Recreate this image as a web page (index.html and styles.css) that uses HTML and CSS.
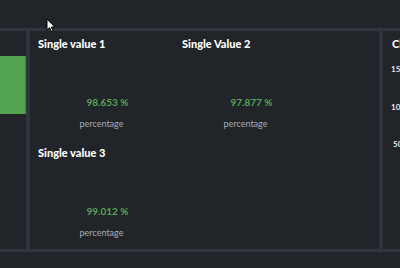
FILE: index.html
```html
<!DOCTYPE html>
<html lang="en">
<head>
    <meta charset="UTF-8" />
    <title>Dashboard</title>
    <link rel="stylesheet" href="styles.css">
</head>
<body>
<div class="topbar"></div>

<div class="panels">
  <div class="panel panel-left">
    <div class="bar"></div>
  </div>

  <div class="panel panel-main">
    <div class="single">
      <div class="title">Single value 1</div>
      <div class="value">98.653 %</div>
      <div class="caption">percentage</div>
    </div>
    <div class="single">
      <div class="title">Single Value 2</div>
      <div class="value">97.877 %</div>
      <div class="caption">percentage</div>
    </div>
    <div class="single">
      <div class="title">Single value 3</div>
      <div class="value">99.012 %</div>
      <div class="caption">percentage</div>
    </div>
  </div>

  <div class="panel panel-right">
    <div class="title">Chart</div>
    <div class="axis">
      <span>150</span>
      <span>100</span>
      <span class="short">50</span>
    </div>
  </div>
</div>

<!-- mouse pointer -->
<svg class="cursor" width="10" height="15" viewBox="0 0 10 15">
  <path d="M1 1 L1 12 L3.6 9.6 L5.4 13.6 L7 12.9 L5.3 9 L8.8 9 Z" fill="#fff" stroke="#000" stroke-width="1" stroke-linejoin="round"/>
</svg>
</body>
</html>
```

FILE: styles.css
```css
body {
    margin: 0;
    width: 400px;
    height: 268px;
    overflow: hidden;
    background-color: #212428;
    font-family: Lato, "Liberation Sans", sans-serif;
    position: relative;
}
.topbar {
    height: 28px;
}
.panels {
    display: flex;
    gap: 4px;
    height: 218px;
    background-color: #30353d;
    border-top: 3px solid #30353d;
    border-bottom: 3px solid #30353d;
}
.panel {
    background-color: #212428;
    overflow: hidden;
}
.panel-left {
    width: 26px;
}
.bar {
    margin-top: 25px;
    height: 58px;
    background-color: #53a351;
    border-right: 1px solid #3f8a3e;
}
.panel-main {
    width: 341px;
    padding: 6px 0 0 8px;
    display: grid;
    grid-template-columns: 144px 144px;
    grid-auto-rows: 109px;
}
.single {
    display: flex;
    flex-direction: column;
}
.title {
    color: #ffffff;
    font-size: 11px;
    font-weight: 900;
    line-height: 14px;
    white-space: nowrap;
}
.value {
    width: 115px;
    padding-left: 12px;
    margin-top: 44px;
    text-align: center;
    color: #55a854;
    font-size: 10px;
    font-weight: bold;
    line-height: 14px;
}
.caption {
    width: 127px;
    margin-top: 9px;
    text-align: center;
    color: #a7adb6;
    font-size: 9px;
    line-height: 12px;
}
.panel-right {
    flex: 1;
    padding: 6px 0 0 9px;
}
.axis {
    display: flex;
    flex-direction: column;
    margin-left: -1px;
    margin-top: 13px;
    gap: 27.5px;
    color: #e8ebef;
    font-size: 8px;
    font-weight: bold;
    line-height: 10px;
    white-space: nowrap;
}
.axis .short {
    padding-left: 2px;
}
.cursor {
    position: absolute;
    left: 46px;
    top: 18px;
}
```
